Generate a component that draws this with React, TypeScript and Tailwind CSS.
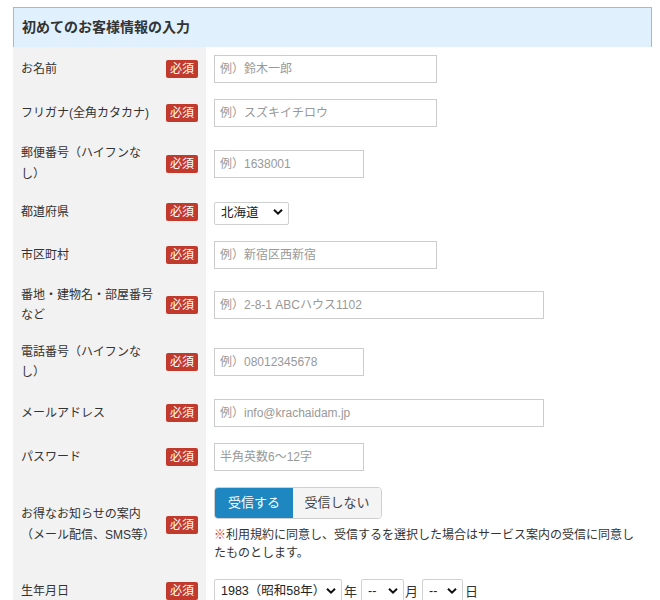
import React from "react";

const font = "font-['Liberation_Sans','Noto_Sans_CJK_JP',sans-serif]";

function Badge() {
  return (
    <span className="shrink-0 rounded-[2px] bg-[#c23a2b] px-[4px] text-[12px] leading-[18px] text-white">
      必須
    </span>
  );
}

function Chevron() {
  return (
    <svg
      className="pointer-events-none absolute right-[6px] top-1/2 -translate-y-1/2"
      width="10"
      height="7"
      viewBox="0 0 10 7"
    >
      <path d="M1 1.2 L5 5.2 L9 1.2" fill="none" stroke="#111" strokeWidth="2" />
    </svg>
  );
}

function Select({ value, width, tall }: { value: string; width: string; tall?: boolean }) {
  return (
    <div className={`relative ${width}`}>
      <select
        defaultValue={value}
        className={`${tall ? "h-[25px]" : "h-[23px]"} w-full appearance-none rounded-[2px] border border-[#d0d0d0] bg-white pl-[6px] text-[12.5px] text-[#222] outline-none`}
      >
        <option>{value}</option>
      </select>
      <Chevron />
    </div>
  );
}

function Input({ placeholder, width }: { placeholder: string; width: string }) {
  return (
    <input
      type="text"
      placeholder={placeholder}
      className={`h-[28px] ${width} border border-[#cccccc] bg-white px-[5px] text-[12px] text-[#333] outline-none placeholder:text-[#999]`}
    />
  );
}

interface RowProps {
  label: React.ReactNode;
  children: React.ReactNode;
}

function Row({ label, children }: RowProps) {
  return (
    <div className="flex">
      <div className="flex w-[193px] shrink-0 items-center justify-between bg-[#f2f2f2] py-2 pl-2 pr-2">
        <div className="w-[136px] text-[12px] leading-[20.5px] text-[#333]">{label}</div>
        <Badge />
      </div>
      <div className="flex flex-1 items-center py-2 pl-2 pr-1">{children}</div>
    </div>
  );
}

export default function App() {
  return (
    <div className={`${font} bg-white pl-[13px] pt-[7px] pr-[8px]`}>
      <div className="w-[639px]">
        <div className="border border-b-0 border-[#b5b5b5] bg-[#e0f1fd] px-2 text-[14px] font-bold leading-[39px] text-[#333]">
          初めてのお客様情報の入力
        </div>

        <Row label="お名前">
          <Input placeholder="例）鈴木一郎" width="w-[223px]" />
        </Row>
        <Row label="フリガナ(全角カタカナ)">
          <Input placeholder="例）スズキイチロウ" width="w-[223px]" />
        </Row>
        <Row
          label={
            <>
              郵便番号（ハイフンな
              <br />
              し）
            </>
          }
        >
          <Input placeholder="例）1638001" width="w-[150px]" />
        </Row>
        <Row label="都道府県">
          <Select value="北海道" width="w-[75px]" />
        </Row>
        <Row label="市区町村">
          <Input placeholder="例）新宿区西新宿" width="w-[223px]" />
        </Row>
        <Row
          label={
            <>
              番地・建物名・部屋番号
              <br />
              など
            </>
          }
        >
          <Input placeholder="例）2-8-1 ABCハウス1102" width="w-[330px]" />
        </Row>
        <Row
          label={
            <>
              電話番号（ハイフンな
              <br />
              し）
            </>
          }
        >
          <Input placeholder="例）08012345678" width="w-[150px]" />
        </Row>
        <Row label="メールアドレス">
          <Input placeholder="例）info@krachaidam.jp" width="w-[330px]" />
        </Row>
        <Row label="パスワード">
          <Input placeholder="半角英数6～12字" width="w-[150px]" />
        </Row>
        <Row
          label={
            <>
              お得なお知らせの案内
              <br />
              （メール配信、SMS等）
            </>
          }
        >
          <div className="flex flex-col">
            <div className="flex w-[168px] overflow-hidden rounded-[4px] border border-[#cfcfcf] text-[13px]">
              <button className="h-[30px] w-[78px] bg-[#1e87c1] text-white">受信する</button>
              <button className="h-[30px] flex-1 bg-[#f4f4f4] text-[#444]">受信しない</button>
            </div>
            <p className="mt-[7px] w-[426px] text-[12px] leading-[18.5px] text-[#333]">
              <span className="text-[#d9352b]">※</span>利用規約に同意し、受信するを選択した場合はサービス案内の受信に同意し
              <br />
              たものとします。
            </p>
          </div>
        </Row>
        <Row label="生年月日">
          <div className="flex items-center text-[13px] text-[#333]">
            <Select value="1983（昭和58年）" width="w-[128px]" tall />
            <span className="ml-[2px] mr-[4px]">年</span>
            <Select value="--" width="w-[43px]" tall />
            <span className="ml-[1px] mr-[4px]">月</span>
            <Select value="--" width="w-[41px]" tall />
            <span className="ml-[2px]">日</span>
          </div>
        </Row>
      </div>
    </div>
  );
}
